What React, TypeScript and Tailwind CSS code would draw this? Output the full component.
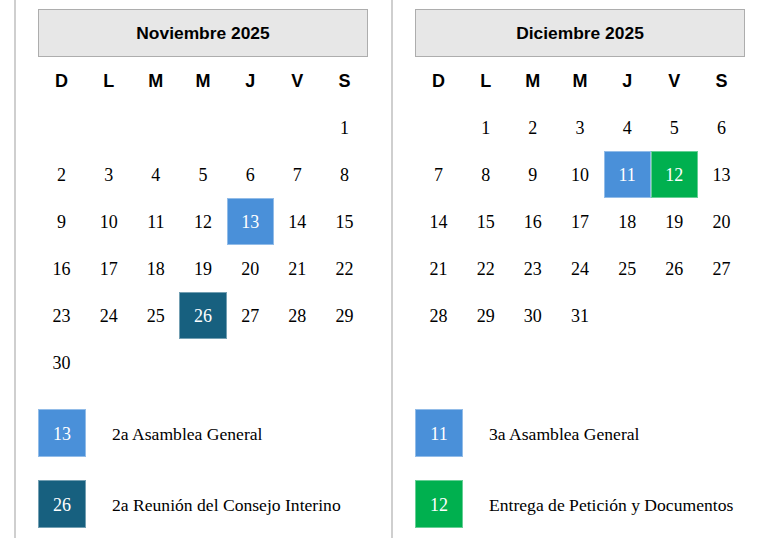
type Highlight = 'blue' | 'teal' | 'green';

type Month = {
  title: string;
  offset: number;
  days: number;
  marks: Record<number, Highlight>;
  legend: { day: number; color: Highlight; label: string }[];
};

const weekdays = ['D', 'L', 'M', 'M', 'J', 'V', 'S'];

const fill: Record<Highlight, string> = {
  blue: 'bg-[#4a90d9] text-white',
  teal: 'bg-[#17607f] text-white',
  green: 'bg-[#00b04f] text-white',
};

const months: Month[] = [
  {
    title: 'Noviembre 2025',
    offset: 6,
    days: 30,
    marks: { 13: 'blue', 26: 'teal' },
    legend: [
      { day: 13, color: 'blue', label: '2a Asamblea General' },
      { day: 26, color: 'teal', label: '2a Reunión del Consejo Interino' },
    ],
  },
  {
    title: 'Diciembre 2025',
    offset: 1,
    days: 31,
    marks: { 11: 'blue', 12: 'green' },
    legend: [
      { day: 11, color: 'blue', label: '3a Asamblea General' },
      { day: 12, color: 'green', label: 'Entrega de Petición y Documentos' },
    ],
  },
];

function MonthPanel({ month }: { month: Month }) {
  const cells: (number | null)[] = [
    ...Array.from({ length: month.offset }, () => null),
    ...Array.from({ length: month.days }, (_, i) => i + 1),
  ];

  return (
    <section className="flex h-[538px] w-[377px] flex-col border-l-2 border-[#cfcfcf] pl-[22px] pt-[9px]">
      <div className="flex h-[48px] w-[330px] items-center justify-center border border-[#adadad] bg-[#e7e7e7] pt-[1px]">
        <h2 className="font-['Liberation_Sans',Arial,sans-serif] text-[17.4px] font-bold text-black">{month.title}</h2>
      </div>

      <div className="grid w-[330px] grid-cols-7">
        {weekdays.map((d, i) => (
          <div key={i} className="flex h-[47px] items-center justify-center pt-[2px] font-['Liberation_Sans',Arial,sans-serif] text-[18px] font-bold text-black">
            {d}
          </div>
        ))}
        {cells.map((day, i) => {
          const mark = day ? month.marks[day] : undefined;
          return (
            <div
              key={i}
              className={`flex h-[47px] items-center justify-center pt-[2px] font-['Liberation_Serif','Times_New_Roman',serif] text-[18px] ${
                mark ? fill[mark] + ' border border-white/40' : 'text-black'
              }`}
            >
              {day ?? ''}
            </div>
          );
        })}
      </div>

      <div className="mt-auto mb-[10px] flex flex-col gap-[23px]">
        {month.legend.map((item) => (
          <div key={item.day} className="flex items-center gap-[26px]">
            <div className={`flex h-[48px] w-[48px] items-center justify-center border border-white/40 pt-[2px] font-['Liberation_Serif','Times_New_Roman',serif] text-[18px] ${fill[item.color]}`}>
              {item.day}
            </div>
            <p className="pt-[2px] font-['Liberation_Serif','Times_New_Roman',serif] text-[17.6px] text-black">{item.label}</p>
          </div>
        ))}
      </div>
    </section>
  );
}

export default function App() {
  return (
    <main className="flex h-[538px] w-[768px] overflow-hidden bg-white pl-[14px]">
      {months.map((m) => (
        <MonthPanel key={m.title} month={m} />
      ))}
    </main>
  );
}
